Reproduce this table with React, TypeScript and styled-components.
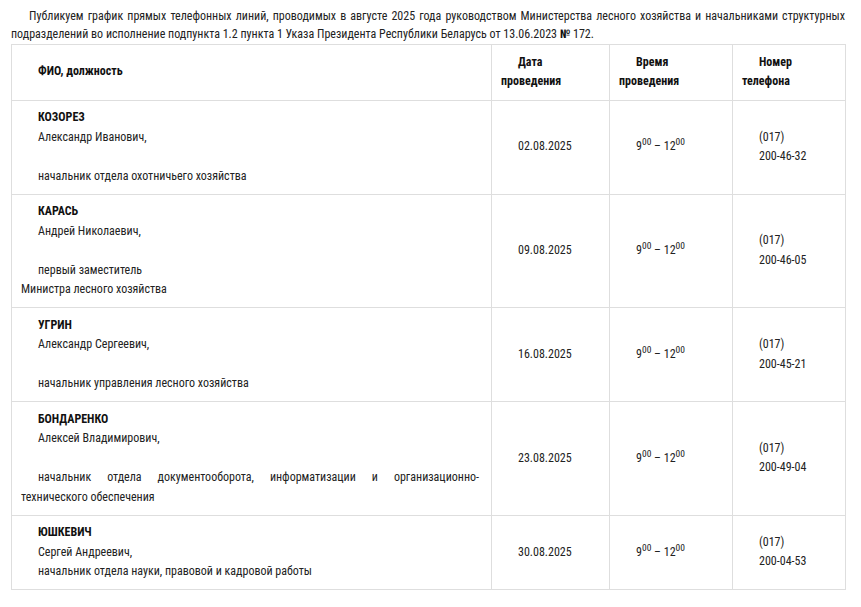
import React from "react";
import styled, { createGlobalStyle } from "styled-components";

const Global = createGlobalStyle`
  html, body { margin: 0; padding: 0; background: #fff; }
  body { font-family: "Roboto Condensed", "Liberation Sans", sans-serif; }
`;

const Page = styled.div`
  padding: 6.5px 0 0 11px;
  width: 834px;
  font-family: "Roboto Condensed", "Liberation Sans", sans-serif;
  font-size: 12px;
  line-height: 19.5px;
  color: #222;
`;

const Intro = styled.p`
  margin: 0;
  text-indent: 18px;
  text-align: justify;
  line-height: 18.5px;
`;

const Strong = styled.strong`
  font-weight: bold;
  color: #111;
`;

const Table = styled.table`
  width: 834px;
  table-layout: fixed;
  border-collapse: collapse;
`;

const Cell = styled.td`
  border: 1px solid #dedede;
  padding: 7.5px 12px 7.5px 9px;
  vertical-align: middle;
`;

const HeadCell = styled(Cell).attrs({ as: "th" })`
  padding-top: 8px;
  padding-bottom: 8px;
  font-weight: bold;
  text-align: left;
  color: #111;
`;

const Para = styled.p`
  margin: 0;
  text-indent: 17px;
  text-align: justify;
  min-height: 19.5px;
`;

const Name = styled(Para)`
  font-weight: bold;
  color: #111;
`;

const Sup = styled.sup`
  font-size: 9.5px;
  line-height: 0;
  vertical-align: 5px;
`;

type Person = {
  surname: string;
  given: string;
  gap: boolean;
  position: React.ReactNode;
  date: string;
  phone: string;
};

const people: Person[] = [
  {
    surname: "КОЗОРЕЗ",
    given: "Александр Иванович,",
    gap: true,
    position: "начальник отдела охотничьего хозяйства",
    date: "02.08.2025",
    phone: "200-46-32",
  },
  {
    surname: "КАРАСЬ",
    given: "Андрей Николаевич,",
    gap: true,
    position: (
      <>
        первый заместитель
        <br />
        Министра лесного хозяйства
      </>
    ),
    date: "09.08.2025",
    phone: "200-46-05",
  },
  {
    surname: "УГРИН",
    given: "Александр Сергеевич,",
    gap: true,
    position: "начальник управления лесного хозяйства",
    date: "16.08.2025",
    phone: "200-45-21",
  },
  {
    surname: "БОНДАРЕНКО",
    given: "Алексей Владимирович,",
    gap: true,
    position:
      "начальник отдела документооборота, информатизации и организационно-технического обеспечения",
    date: "23.08.2025",
    phone: "200-49-04",
  },
  {
    surname: "ЮШКЕВИЧ",
    given: "Сергей Андреевич,",
    gap: false,
    position: "начальник отдела науки, правовой и кадровой работы",
    date: "30.08.2025",
    phone: "200-04-53",
  },
];

export default function App() {
  return (
    <>
      <Global />
      <Page>
        <Intro>
          Публикуем график прямых телефонных линий, проводимых в августе 2025 года руководством
          Министерства лесного хозяйства и начальниками структурных подразделений во исполнение
          подпункта 1.2 пункта 1 Указа Президента Республики Беларусь от 13.06.2023{" "}
          <Strong>№</Strong> 172.
        </Intro>
        <Table>
          <colgroup>
            <col style={{ width: 480 }} />
            <col style={{ width: 118 }} />
            <col style={{ width: 123 }} />
            <col style={{ width: 113 }} />
          </colgroup>
          <thead>
            <tr>
              <HeadCell>
                <Para>ФИО, должность</Para>
              </HeadCell>
              <HeadCell>
                <Para>Дата проведения</Para>
              </HeadCell>
              <HeadCell>
                <Para>Время проведения</Para>
              </HeadCell>
              <HeadCell>
                <Para>Номер телефона</Para>
              </HeadCell>
            </tr>
          </thead>
          <tbody>
            {people.map((p) => (
              <tr key={p.surname}>
                <Cell>
                  <Name>{p.surname}</Name>
                  <Para>{p.given}</Para>
                  {p.gap && <Para />}
                  <Para>{p.position}</Para>
                </Cell>
                <Cell>
                  <Para>{p.date}</Para>
                </Cell>
                <Cell>
                  <Para>
                    9<Sup>00</Sup> – 12<Sup>00</Sup>
                  </Para>
                </Cell>
                <Cell>
                  <Para>(017)</Para>
                  <Para>{p.phone}</Para>
                </Cell>
              </tr>
            ))}
          </tbody>
        </Table>
      </Page>
    </>
  );
}
